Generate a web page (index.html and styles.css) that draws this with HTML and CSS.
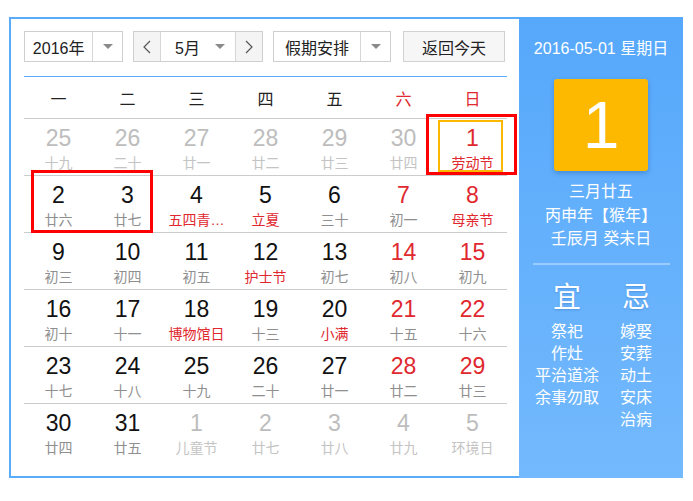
FILE: index.html
```html
<!DOCTYPE html>
<html lang="zh-CN">
<head>
<meta charset="utf-8">
<title>万年历</title>
<link rel="stylesheet" href="styles.css">
</head>
<body>
<div class="cal">
  <div class="main">
    <div class="toolbar">
      <div class="select year"><span class="val">2016年</span><span class="drop"><i class="tri"></i></span></div>
      <div class="select month">
        <span class="nav"><svg width="8" height="14" viewBox="0 0 8 14"><path d="M7 1L1 7l6 6" fill="none" stroke="#555" stroke-width="1.2"/></svg></span>
        <span class="val mval">5月<i class="tri"></i></span>
        <span class="nav"><svg width="8" height="14" viewBox="0 0 8 14"><path d="M1 1l6 6-6 6" fill="none" stroke="#555" stroke-width="1.2"/></svg></span>
      </div>
      <div class="select holiday"><span class="val">假期安排</span><span class="drop"><i class="tri"></i></span></div>
      <div class="btn">返回今天</div>
    </div>
    <div class="grid">
      <div class="wk">一</div><div class="wk">二</div><div class="wk">三</div><div class="wk">四</div><div class="wk">五</div><div class="wk red">六</div><div class="wk red">日</div>

      <div class="day other"><b>25</b><span>十九</span></div>
      <div class="day other"><b>26</b><span>二十</span></div>
      <div class="day other"><b>27</b><span>廿一</span></div>
      <div class="day other"><b>28</b><span>廿二</span></div>
      <div class="day other"><b>29</b><span>廿三</span></div>
      <div class="day other"><b>30</b><span>廿四</span></div>
      <div class="day wkend today"><b>1</b><span class="fest">劳动节</span></div>

      <div class="day"><b>2</b><span>廿六</span></div>
      <div class="day"><b>3</b><span>廿七</span></div>
      <div class="day"><b>4</b><span class="fest">五四青…</span></div>
      <div class="day"><b>5</b><span class="fest">立夏</span></div>
      <div class="day"><b>6</b><span>三十</span></div>
      <div class="day wkend"><b>7</b><span>初一</span></div>
      <div class="day wkend"><b>8</b><span class="fest">母亲节</span></div>

      <div class="day"><b>9</b><span>初三</span></div>
      <div class="day"><b>10</b><span>初四</span></div>
      <div class="day"><b>11</b><span>初五</span></div>
      <div class="day"><b>12</b><span class="fest">护士节</span></div>
      <div class="day"><b>13</b><span>初七</span></div>
      <div class="day wkend"><b>14</b><span>初八</span></div>
      <div class="day wkend"><b>15</b><span>初九</span></div>

      <div class="day"><b>16</b><span>初十</span></div>
      <div class="day"><b>17</b><span>十一</span></div>
      <div class="day"><b>18</b><span class="fest">博物馆日</span></div>
      <div class="day"><b>19</b><span>十三</span></div>
      <div class="day"><b>20</b><span class="fest">小满</span></div>
      <div class="day wkend"><b>21</b><span>十五</span></div>
      <div class="day wkend"><b>22</b><span>十六</span></div>

      <div class="day"><b>23</b><span>十七</span></div>
      <div class="day"><b>24</b><span>十八</span></div>
      <div class="day"><b>25</b><span>十九</span></div>
      <div class="day"><b>26</b><span>二十</span></div>
      <div class="day"><b>27</b><span>廿一</span></div>
      <div class="day wkend"><b>28</b><span>廿二</span></div>
      <div class="day wkend"><b>29</b><span>廿三</span></div>

      <div class="day last"><b>30</b><span>廿四</span></div>
      <div class="day last"><b>31</b><span>廿五</span></div>
      <div class="day last other"><b>1</b><span>儿童节</span></div>
      <div class="day last other"><b>2</b><span>廿七</span></div>
      <div class="day last other"><b>3</b><span>廿八</span></div>
      <div class="day last other"><b>4</b><span>廿九</span></div>
      <div class="day last other"><b>5</b><span>环境日</span></div>
    </div>
  </div>
  <aside class="side">
    <div class="sdate">2016-05-01 星期日</div>
    <div class="bigday">1</div>
    <div class="lunar">
      <div>三月廿五</div>
      <div>丙申年【猴年】</div>
      <div>壬辰月 癸未日</div>
    </div>
    <div class="sep"></div>
    <div class="yiji">
      <div class="col">
        <div class="head">宜</div>
        <div>祭祀</div><div>作灶</div><div>平治道涂</div><div>余事勿取</div>
      </div>
      <div class="col">
        <div class="head">忌</div>
        <div>嫁娶</div><div>安葬</div><div>动土</div><div>安床</div><div>治病</div>
      </div>
    </div>
  </aside>
  <div class="mark mark-a"></div>
  <div class="mark mark-b"></div>
</div>
</body>
</html>
```

FILE: styles.css
```css
* { box-sizing: border-box; }
body {
  margin: 0;
  background: #fff;
  font-family: "Liberation Sans", "Noto Sans CJK SC", sans-serif;
  color: #222;
}
.cal {
  position: relative;
  display: flex;
  margin: 17px 0 0 9px;
  width: 674px;
  height: 461px;
}
.main {
  width: 510px;
  height: 100%;
  border: 2px solid #5aabfa;
  border-right: none;
  padding: 12px 0 0 13px;
}
.toolbar {
  display: flex;
  gap: 10px;
  height: 31px;
}
.select {
  display: flex;
  border: 1px solid #cfcfcf;
  background: #fff;
  font-size: 16px;
  color: #222;
}
.select .val {
  display: flex;
  align-items: center;
  justify-content: center;
}
.select .drop {
  width: 30px;
  border-left: 1px solid #d6d6d6;
  display: flex;
  align-items: center;
  justify-content: center;
}
.tri {
  display: inline-block;
  width: 0;
  height: 0;
  border-left: 5px solid transparent;
  border-right: 5px solid transparent;
  border-top: 5px solid #8a8a8a;
}
.year { width: 99px; }
.year .val { width: 68px; }
.month { width: 130px; }
.month .nav {
  width: 27px;
  background: #f4f4f4;
  display: flex;
  align-items: center;
  justify-content: center;
}
.month .nav:first-child { border-right: 1px solid #d6d6d6; }
.month .nav:last-child { border-left: 1px solid #d6d6d6; }
.mval {
  flex: 1;
  gap: 15px;
  padding-left: 4px;
}
.holiday { width: 118px; }
.holiday .val { width: 87px; }
.btn {
  margin-left: 2px;
  width: 102px;
  border: 1px solid #d2d2d2;
  background: #f6f6f6;
  font-size: 16px;
  display: flex;
  align-items: center;
  justify-content: center;
  color: #222;
}
.grid {
  margin-top: 14px;
  width: 483px;
  border-top: 1px solid #5aabfa;
  display: grid;
  grid-template-columns: repeat(7, 69px);
}
.wk {
  height: 42px;
  border-bottom: 1px solid #cccccc;
  display: flex;
  align-items: center;
  justify-content: center;
  font-size: 16px;
  color: #222;
}
.wk.red { color: #e0282e; }
.day {
  position: relative;
  height: 57px;
  border-bottom: 1px solid #cccccc;
  padding-top: 6px;
  display: flex;
  flex-direction: column;
  align-items: center;
}
.day.last { border-bottom-color: transparent; }
.day b {
  font-weight: normal;
  font-size: 23px;
  line-height: 26px;
  color: #111;
}
.day span {
  margin-top: 3px;
  font-size: 14px;
  line-height: 18px;
  color: #8f8f8f;
  white-space: nowrap;
}
.day.wkend b { color: #e0282e; }
.day span.fest { color: #e0282e; }
.day.other b { color: #bdbdbd; }
.day.other span { color: #c4c4c4; }
.day.today::after {
  content: "";
  position: absolute;
  top: 1px;
  left: 0;
  right: 4px;
  bottom: 3px;
  border: 2px solid #fbb800;
}
.side {
  width: 164px;
  height: 100%;
  background: linear-gradient(#56a8fb, #73b9fd);
  color: #fff;
  display: flex;
  flex-direction: column;
  align-items: center;
  padding-top: 21px;
}
.sdate {
  font-size: 16px;
  line-height: 22px;
}
.bigday {
  margin-top: 19px;
  width: 94px;
  height: 92px;
  background: #fdb900;
  border-radius: 3px;
  box-shadow: 0 2px 5px rgba(0, 60, 140, 0.3);
  font-size: 66px;
  line-height: 92px;
  text-align: center;
  color: #fff;
}
.lunar {
  margin-top: 9px;
  text-align: center;
  font-size: 16px;
  line-height: 23.5px;
}
.sep {
  margin-top: 12px;
  width: 137px;
  height: 2px;
  background: rgba(255, 255, 255, 0.35);
}
.yiji {
  margin-top: 16px;
  display: flex;
  padding-left: 1px;
}
.yiji .col {
  width: 69px;
  text-align: center;
  font-size: 16px;
  line-height: 22px;
}
.yiji .head {
  font-size: 28px;
  line-height: 34px;
  margin-bottom: 6px;
  text-shadow: 0 1px 2px rgba(0, 60, 140, 0.25);
}
.mark {
  position: absolute;
  border: 3px solid #f00;
}
.mark-a { left: 22px; top: 153px; width: 122px; height: 63px; }
.mark-b { left: 417px; top: 97px; width: 91px; height: 61px; }
```
